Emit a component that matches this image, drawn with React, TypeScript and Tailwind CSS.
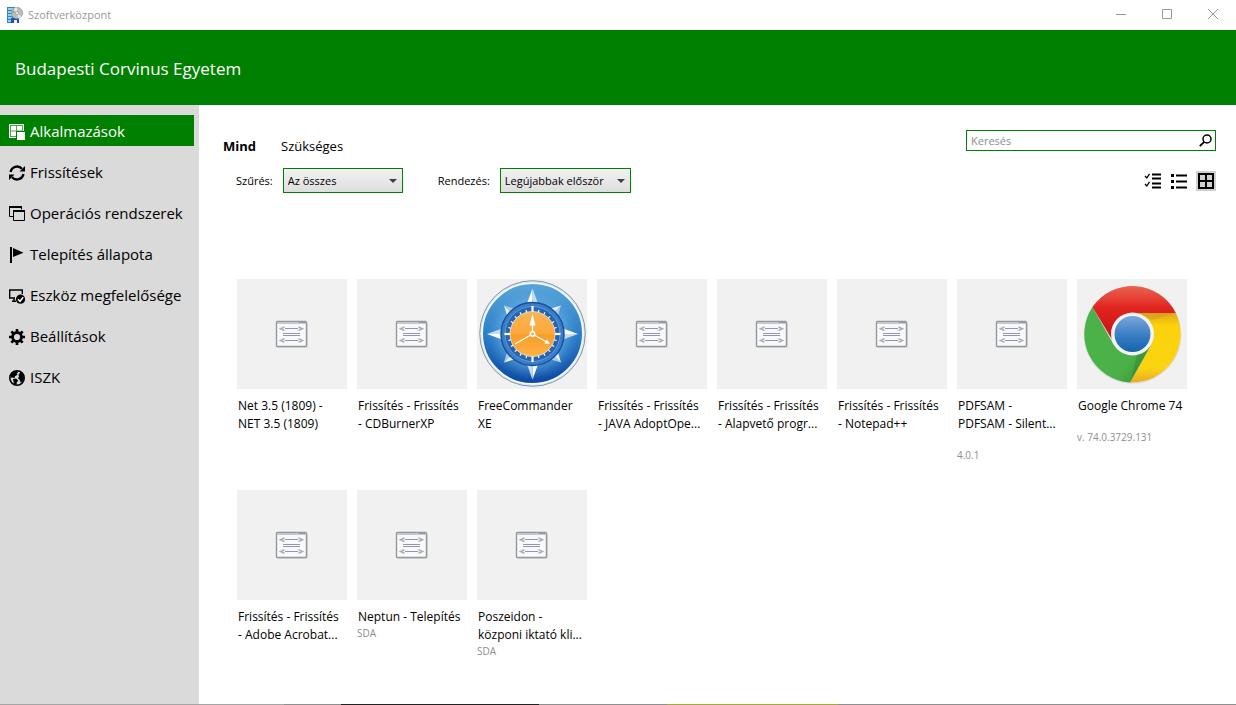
import { useState, type ReactNode } from 'react';

type App = {
  lines: string[];
  publisher?: string;
  version?: string;
  icon?: 'freecommander' | 'chrome';
};

const APPS: App[] = [
  { lines: ['Net 3.5 (1809) -', 'NET 3.5 (1809)'] },
  { lines: ['Frissítés - Frissítés', '- CDBurnerXP'] },
  { lines: ['FreeCommander', 'XE'], icon: 'freecommander' },
  { lines: ['Frissítés - Frissítés', '- JAVA AdoptOpe...'] },
  { lines: ['Frissítés - Frissítés', '- Alapvető progr...'] },
  { lines: ['Frissítés - Frissítés', '- Notepad++'] },
  { lines: ['PDFSAM -', 'PDFSAM - Silent...'], version: '4.0.1' },
  { lines: ['Google Chrome 74'], version: 'v. 74.0.3729.131', icon: 'chrome' },
  { lines: ['Frissítés - Frissítés', '- Adobe Acrobat...'] },
  { lines: ['Neptun - Telepítés'], publisher: 'SDA' },
  { lines: ['Poszeidon -', 'közponi iktató kli...'], publisher: 'SDA' },
];

function TitleIcon() {
  return (
    <svg width="17" height="17" viewBox="0 0 17 17" aria-hidden="true">
      <rect x="0" y="0" width="8" height="16" fill="#2f86c8" />
      <path d="M1 2h5M1 5h5M1 8h5M1 11h4M1 14h3" stroke="#bfe6fb" strokeWidth="1.4" />
      <rect x="4" y="11" width="8" height="5" fill="#1558ab" />
      <rect x="7" y="13" width="3" height="3" fill="#e8f3fb" />
      <circle cx="10" cy="6" r="5.7" fill="#bcbcbc" stroke="#8d8d8d" strokeWidth="0.6" />
      <path d="M10 6L6.500 2A5.300 5.300 0 0 1 10 0.600zM10 6l4.500 3.500a5.300 5.300 0 0 1-3 1.700z" fill="#e6e6e6" />
      <circle cx="10" cy="6" r="1.500" fill="#f6f6f6" stroke="#8a8a8a" strokeWidth="0.6" />
      <circle cx="6" cy="5" r="1" fill="#6cbf4a" />
    </svg>
  );
}

function AppsIcon() {
  return (
    <svg width="16" height="16" viewBox="0 0 16 16" aria-hidden="true">
      <path d="M0 0h15v14H0z" fill="#fff" />
      <path d="M1.500 1v12M13.500 1v7M7.500 1v12M1 1.500h13M1 7h13M1 12.500h7" stroke="#4fa54f" fill="none" />
      <path d="M7 7h9v9H7z" fill="#008000" />
      <path d="M8 8h8v8H8z" fill="#fff" />
    </svg>
  );
}

function UpdatesIcon() {
  return (
    <svg width="16" height="16" viewBox="0 0 16 16" aria-hidden="true">
      <path d="M1.600 7A6.500 6.500 0 0 1 12.900 3.800M14.400 9A6.500 6.500 0 0 1 3.100 12.200" fill="none" stroke="#000" strokeWidth="2.400" />
      <path d="M16 1v5.500h-5.500zM0 15V9.500h5.500z" fill="#000" />
    </svg>
  );
}

function SystemsIcon() {
  return (
    <svg width="16" height="16" viewBox="0 0 16 16" fill="none" stroke="#000" aria-hidden="true">
      <path d="M4 10.500H0.500v-10h12v3" />
      <path d="M0 1h13M4 5h12" strokeWidth="2" />
      <path d="M4.500 4.500h11v10h-11z" />
    </svg>
  );
}

function StatusIcon() {
  return (
    <svg width="16" height="16" viewBox="0 0 16 16" aria-hidden="true">
      <path d="M1 0h2v16H1zM4 1l10.500 4.800L4 10z" />
    </svg>
  );
}

function ComplianceIcon() {
  return (
    <svg width="16" height="16" viewBox="0 0 16 16" aria-hidden="true">
      <path d="M6 10H0.700V2h12.600v4M3 13.200h4M5 10v3" fill="none" stroke="#000" strokeWidth="1.400" />
      <circle cx="11.500" cy="11.200" r="4.600" />
      <path d="M9 11.300l2 2 3.200-4" fill="none" stroke="#fff" strokeWidth="1.500" />
    </svg>
  );
}

function SettingsIcon() {
  return (
    <svg width="16" height="16" viewBox="0 0 16 16" aria-hidden="true">
      <circle cx="8" cy="8" r="4.500" fill="none" stroke="#000" strokeWidth="2.800" />
      <path
        d="M8 0v3M8 13v3M0 8h3M13 8h3M2.300 2.300l2.200 2.200M11.500 11.500l2.200 2.200M13.700 2.300l-2.200 2.200M4.500 11.500l-2.200 2.200"
        stroke="#000"
        strokeWidth="2.600"
      />
    </svg>
  );
}

function GlobeIcon() {
  return (
    <svg width="16" height="16" viewBox="0 0 16 16" aria-hidden="true">
      <circle cx="8" cy="8" r="7.200" fill="#dadada" stroke="#000" strokeWidth="1.600" />
      <path d="M2 4.500L5 1.500 8 1l1.200 1.600-1.600.8 1 1.400-2.600 1.400L5.500 8 3 7.500 1.500 8z" />
      <path d="M4 9l3-.5 2.200 2-1.400 2L7.500 15 5 14z" />
      <path d="M10 6.500l-.4-2 2-2.500L14 4l1 4-1.500 3.500-2 1-.8-2.800-1.700-1.200z" />
    </svg>
  );
}

function PackageIcon() {
  return (
    <svg width="34" height="30" viewBox="0 0 34 30" aria-hidden="true">
      <rect x="3" y="4" width="30" height="25" rx="1.500" fill="#dcdcdc" />
      <rect x="1.500" y="2.500" width="30" height="25" rx="1" fill="#f8f9fa" stroke="#94989c" strokeWidth="1.400" />
      <path d="M2 4h29" stroke="#c3c8cd" strokeWidth="2" />
      <path d="M24 3.500h6" stroke="#7d8da0" strokeWidth="1.200" strokeDasharray="1.500 0.700" />
      <path d="M9.500 8L5.500 9.700l4 1.800M23.500 8l4 1.700-4 1.800M9.500 19.700l-4 1.800 4 1.700M23.500 19.700l4 1.800-4 1.700" fill="none" stroke="#aeacb7" strokeWidth="1.500" />
      <path d="M10 9.500h13M10 21.500h13M8 14.500h17M8 16.500h17" stroke="#9592b4" strokeWidth="1" />
    </svg>
  );
}

const TICKS = Array.from({ length: 24 }, (_, i) => i * 15);

function FreeCommanderIcon() {
  return (
    <svg width="110" height="110" viewBox="0 0 110 110" aria-hidden="true">
      <defs>
        <linearGradient id="fc-body" x1="0" y1="0" x2="0" y2="1">
          <stop offset="0" stopColor="#5aa5da" />
          <stop offset="0.500" stopColor="#2c7fc8" />
          <stop offset="1" stopColor="#0c47a0" />
        </linearGradient>
        <radialGradient id="fc-glow">
          <stop offset="0.550" stopColor="#7cc4f2" stopOpacity="0.800" />
          <stop offset="1" stopColor="#4a9cdc" stopOpacity="0" />
        </radialGradient>
        <linearGradient id="fc-face" x1="0" y1="0" x2="0" y2="1">
          <stop offset="0" stopColor="#fbb553" />
          <stop offset="0.500" stopColor="#fba83b" />
          <stop offset="0.520" stopColor="#f99c29" />
          <stop offset="1" stopColor="#fdb347" />
        </linearGradient>
      </defs>
      <circle cx="55.500" cy="54.500" r="52.800" fill="#d5e6f5" stroke="#8796a8" strokeWidth="1" />
      <circle cx="55.500" cy="54.500" r="50.300" fill="url(#fc-body)" stroke="#f4faff" strokeWidth="1.600" />
      <circle cx="55.500" cy="55" r="46" fill="url(#fc-glow)" />
      {/* compass points */}
      {[0, 90, 180, 270].map((angle) => (
        <g key={angle} transform={`rotate(${angle} 55.5 55)`}>
          <path d="M55.500 9.500L49.500 26l6 6z" fill="#fff" />
          <path d="M55.500 9.500l6 16.500-6 6z" fill="#c3dcf0" />
          <path d="M84 26.500L69 31l6 5z" fill="#e6f2fb" />
          <path d="M84 26.500L79.500 41.500l-5-6z" fill="#a5cbea" />
        </g>
      ))}
      <circle cx="55.500" cy="55" r="31.500" fill="#3a7fc6" stroke="#1a4f9c" strokeWidth="1.500" />
      <circle cx="55.500" cy="55" r="27.500" fill="#2565b4" stroke="#5c9bd5" strokeWidth="1" />
      {TICKS.map((angle) => (
        <path
          key={angle}
          d={angle % 90 === 0 ? 'M55.500 27v6' : 'M55.500 30v3'}
          transform={`rotate(${angle} 55.5 55)`}
          stroke="#fff"
          strokeWidth={angle % 90 === 0 ? 2.2 : 1.2}
        />
      ))}
      <circle cx="55.500" cy="55" r="22.500" fill="url(#fc-face)" stroke="#f6e6cd" strokeWidth="0.800" />
      <path d="M55.500 55V43M55.500 55L38 65M55.500 55l14 8" stroke="#fff" strokeWidth="1.300" />
      <path d="M55.500 35l3 11.500h-6zM73 65l-5.500-.5 2.500-4z" fill="#fff" />
      <circle cx="55.500" cy="55" r="2.200" fill="#fba83b" stroke="#fff" strokeWidth="1.600" />
    </svg>
  );
}

function ChromeIcon() {
  return (
    <svg width="110" height="110" viewBox="0 0 110 110" aria-hidden="true">
      <defs>
        <linearGradient id="ch-red" x1="0" y1="0" x2="0" y2="1">
          <stop offset="0" stopColor="#ec6350" />
          <stop offset="0.400" stopColor="#e0241f" />
          <stop offset="1" stopColor="#c41016" />
        </linearGradient>
        <linearGradient id="ch-yellow" x1="0" y1="0" x2="0" y2="1">
          <stop offset="0" stopColor="#e0a81c" />
          <stop offset="0.180" stopColor="#fcd20b" />
          <stop offset="0.800" stopColor="#fad312" />
          <stop offset="1" stopColor="#e9ab20" />
        </linearGradient>
        <linearGradient id="ch-green" x1="0" y1="0" x2="1" y2="1">
          <stop offset="0" stopColor="#4bb34c" />
          <stop offset="0.700" stopColor="#4bb047" />
          <stop offset="1" stopColor="#328a38" />
        </linearGradient>
        <linearGradient id="ch-blue" x1="0" y1="0" x2="0" y2="1">
          <stop offset="0" stopColor="#7aa7dc" />
          <stop offset="0.500" stopColor="#3e7fc5" />
          <stop offset="1" stopColor="#1264ad" />
        </linearGradient>
      </defs>
      <circle cx="55.500" cy="55.800" r="48.800" fill="#dcdcdc" />
      <path d="M55.500 34H98.800A48.500 48.500 0 0 1 53 103.400L74 66z" fill="url(#ch-yellow)" />
      <path d="M15.500 28L36.500 65.500 55 76l19-10-21 37.400A48.500 48.500 0 0 1 15.500 28z" fill="url(#ch-green)" />
      <path d="M15.500 28A48.500 48.500 0 0 1 98.800 34H55.500L36 62z" fill="url(#ch-red)" />
      <path d="M55.500 34h43.300L76 41z" fill="#c98f1b" opacity="0.350" />
      <path d="M74 66L53 103.400 60 76z" fill="#27702f" opacity="0.300" />
      <circle cx="55.500" cy="55" r="21.500" fill="#f3f3f3" />
      <circle cx="55.500" cy="55" r="18" fill="url(#ch-blue)" />
    </svg>
  );
}

const NAV: { label: string; icon: ReactNode }[] = [
  { label: 'Alkalmazások', icon: <AppsIcon /> },
  { label: 'Frissítések', icon: <UpdatesIcon /> },
  { label: 'Operációs rendszerek', icon: <SystemsIcon /> },
  { label: 'Telepítés állapota', icon: <StatusIcon /> },
  { label: 'Eszköz megfelelősége', icon: <ComplianceIcon /> },
  { label: 'Beállítások', icon: <SettingsIcon /> },
  { label: 'ISZK', icon: <GlobeIcon /> },
];

function Dropdown({ id, label, options, width }: { id: string; label: string; options: string[]; width: string }) {
  return (
    <div className="flex items-center gap-[10px]">
      <label htmlFor={id} className="pt-0.5 text-[11px]">
        {label}
      </label>
      <div className={`relative ${width}`}>
        <select
          id={id}
          className="block h-[25px] w-full appearance-none border border-[#008000] bg-linear-to-b from-[#f2f2f2] to-[#dedede] pt-0.5 pl-1 text-[11px] outline-none"
        >
          {options.map((option) => (
            <option key={option}>{option}</option>
          ))}
        </select>
        <svg
          className="pointer-events-none absolute top-[11px] right-[6px]"
          width="8"
          height="4"
          viewBox="0 0 8 4"
          aria-hidden="true"
        >
          <path d="M0 0h8L4 4z" fill="#404040" />
        </svg>
      </div>
    </div>
  );
}

function AppTile({ app }: { app: App }) {
  return (
    <li className="min-h-[211px] w-[110px]">
      <a href="#" className="block">
        <div className="flex h-[110px] items-center justify-center bg-[#f1f1f1]">
          {app.icon === 'freecommander' && <FreeCommanderIcon />}
          {app.icon === 'chrome' && <ChromeIcon />}
          {!app.icon && <PackageIcon />}
        </div>
        <div className="mt-2 pl-px text-[12px] leading-[18px] whitespace-nowrap">
          {app.lines.map((line) => (
            <div key={line}>{line}</div>
          ))}
        </div>
        <div className="min-h-[15px] text-[10px] leading-[15px] text-[#8e8e8e]">{app.publisher}</div>
        <div className="text-[10px] leading-[15px] text-[#8e8e8e]">{app.version}</div>
      </a>
    </li>
  );
}

export default function SoftwareCenter() {
  const [active, setActive] = useState('Alkalmazások');
  const [query, setQuery] = useState('');

  return (
    <div className="flex min-h-screen flex-col bg-white font-['Open_Sans','Noto_Sans',sans-serif] text-black">
      {/* Title bar */}
      <div className="flex h-[30px] items-center justify-between pr-[17px] pl-[7px] text-[#999]">
        <div className="flex items-center gap-1">
          <TitleIcon />
          <span className="text-[11px]">Szoftverközpont</span>
        </div>
        <div className="flex items-center gap-[34px]">
          <button aria-label="Kis méret">
            <svg width="12" height="12" viewBox="0 0 12 12" stroke="currentColor">
              <path d="M1 5.500h10" />
            </svg>
          </button>
          <button aria-label="Teljes méret">
            <svg width="12" height="12" viewBox="0 0 12 12" fill="none" stroke="currentColor">
              <path d="M1.500 0.500h9v9h-9z" />
            </svg>
          </button>
          <button aria-label="Bezárás">
            <svg width="12" height="12" viewBox="0 0 12 12" stroke="currentColor">
              <path d="M1 0l10 10M11 0L1 10" />
            </svg>
          </button>
        </div>
      </div>

      <header className="flex h-[75px] items-center bg-[#008000] px-[15px] pt-0.5">
        <h1 className="text-[17px] text-white">Budapesti Corvinus Egyetem</h1>
      </header>

      <div className="flex flex-1">
        <nav className="w-[199px] shrink-0 bg-[#dadada] pt-[10px] pr-[5px]">
          <ul className="flex flex-col gap-[10px]">
            {NAV.map((item) => (
              <li key={item.label}>
                <button
                  onClick={() => setActive(item.label)}
                  className={`flex h-[31px] w-full items-center gap-[5px] pt-0.5 pl-[9px] text-[15px] whitespace-nowrap ${
                    active === item.label ? 'bg-[#008000] text-white' : ''
                  }`}
                >
                  {item.icon}
                  {item.label}
                </button>
              </li>
            ))}
          </ul>
        </nav>

        <main className="min-w-0 flex-1 pt-6">
          <div className="flex items-start justify-between pr-5 pl-6">
            <div>
              <div className="flex h-[34px] items-center gap-[25px] pt-0.5 text-[13px]">
                <button className="font-bold">Mind</button>
                <button>Szükséges</button>
              </div>
              <div className="mt-[5px] flex gap-[35px] pl-[13px]">
                <Dropdown id="filter" label="Szűrés:" options={['Az összes', 'Szükséges']} width="w-[120px]" />
                <Dropdown
                  id="sort"
                  label="Rendezés:"
                  options={['Legújabbak először', 'Legrégebbiek először']}
                  width="w-[131px]"
                />
              </div>
            </div>
            <div className="flex flex-col items-end pt-px">
              <div className="flex h-[21px] w-[250px] items-center border border-[#008000] pr-[3px] pl-1">
                <input
                  type="text"
                  aria-label="Keresés"
                  placeholder="Keresés"
                  value={query}
                  onChange={(e) => setQuery(e.target.value)}
                  className="min-w-0 flex-1 pt-0.5 text-[11px] outline-none placeholder:text-[#8e8e8e]"
                />
                <button aria-label="Keresés indítása">
                  <svg width="13" height="13" viewBox="0 0 13 13" fill="none" stroke="#000">
                    <circle cx="8" cy="5" r="4" strokeWidth="1.500" />
                    <path d="M5.200 7.800L0.800 12.200" strokeWidth="1.800" />
                  </svg>
                </button>
              </div>
              <div className="mt-5 flex items-center gap-2">
                <button aria-label="Többszörös kijelölés">
                  <svg width="18" height="16" viewBox="0 0 18 16" fill="none" stroke="#000">
                    <path d="M8 1.500h9M8 5.500h9M8 10.500h9M8 14.500h9" strokeWidth="1.800" />
                    <path d="M1 3l1.800 2L5.500 0.800M1 11l1.800 2 2.700-4.200" strokeWidth="1.300" />
                  </svg>
                </button>
                <button aria-label="Lista nézet">
                  <svg width="18" height="16" viewBox="0 0 18 16">
                    <path d="M1 1h3v3H1zM1 7h3v3H1zM1 13h3v3H1zM6 1.500h11v2H6zM6 7.500h11v2H6zM6 13.500h11v2H6z" />
                  </svg>
                </button>
                <button aria-label="Mozaik nézet" className="bg-[#d0d0d0]">
                  <svg width="20" height="20" viewBox="0 0 20 20" fill="none" stroke="#000" strokeWidth="2">
                    <path d="M3 3h14v14H3zM10 3v14M3 10h14" />
                  </svg>
                </button>
              </div>
            </div>
          </div>

          <ul className="mt-[86px] flex flex-wrap gap-x-[10px] pl-[38px]">
            {APPS.map((app) => (
              <AppTile key={app.lines.join(' ')} app={app} />
            ))}
          </ul>
        </main>
      </div>

      {/* Lower window edge */}
      <div className="flex h-px bg-[#8f8f8f]">
        <div className="w-[23%] bg-[#a5a5a5]" />
        <div className="ml-[4.6%] w-[16%] bg-[#222]" />
        <div className="ml-[10.4%] w-[13.8%] bg-[#a4ab35]" />
      </div>
    </div>
  );
}
